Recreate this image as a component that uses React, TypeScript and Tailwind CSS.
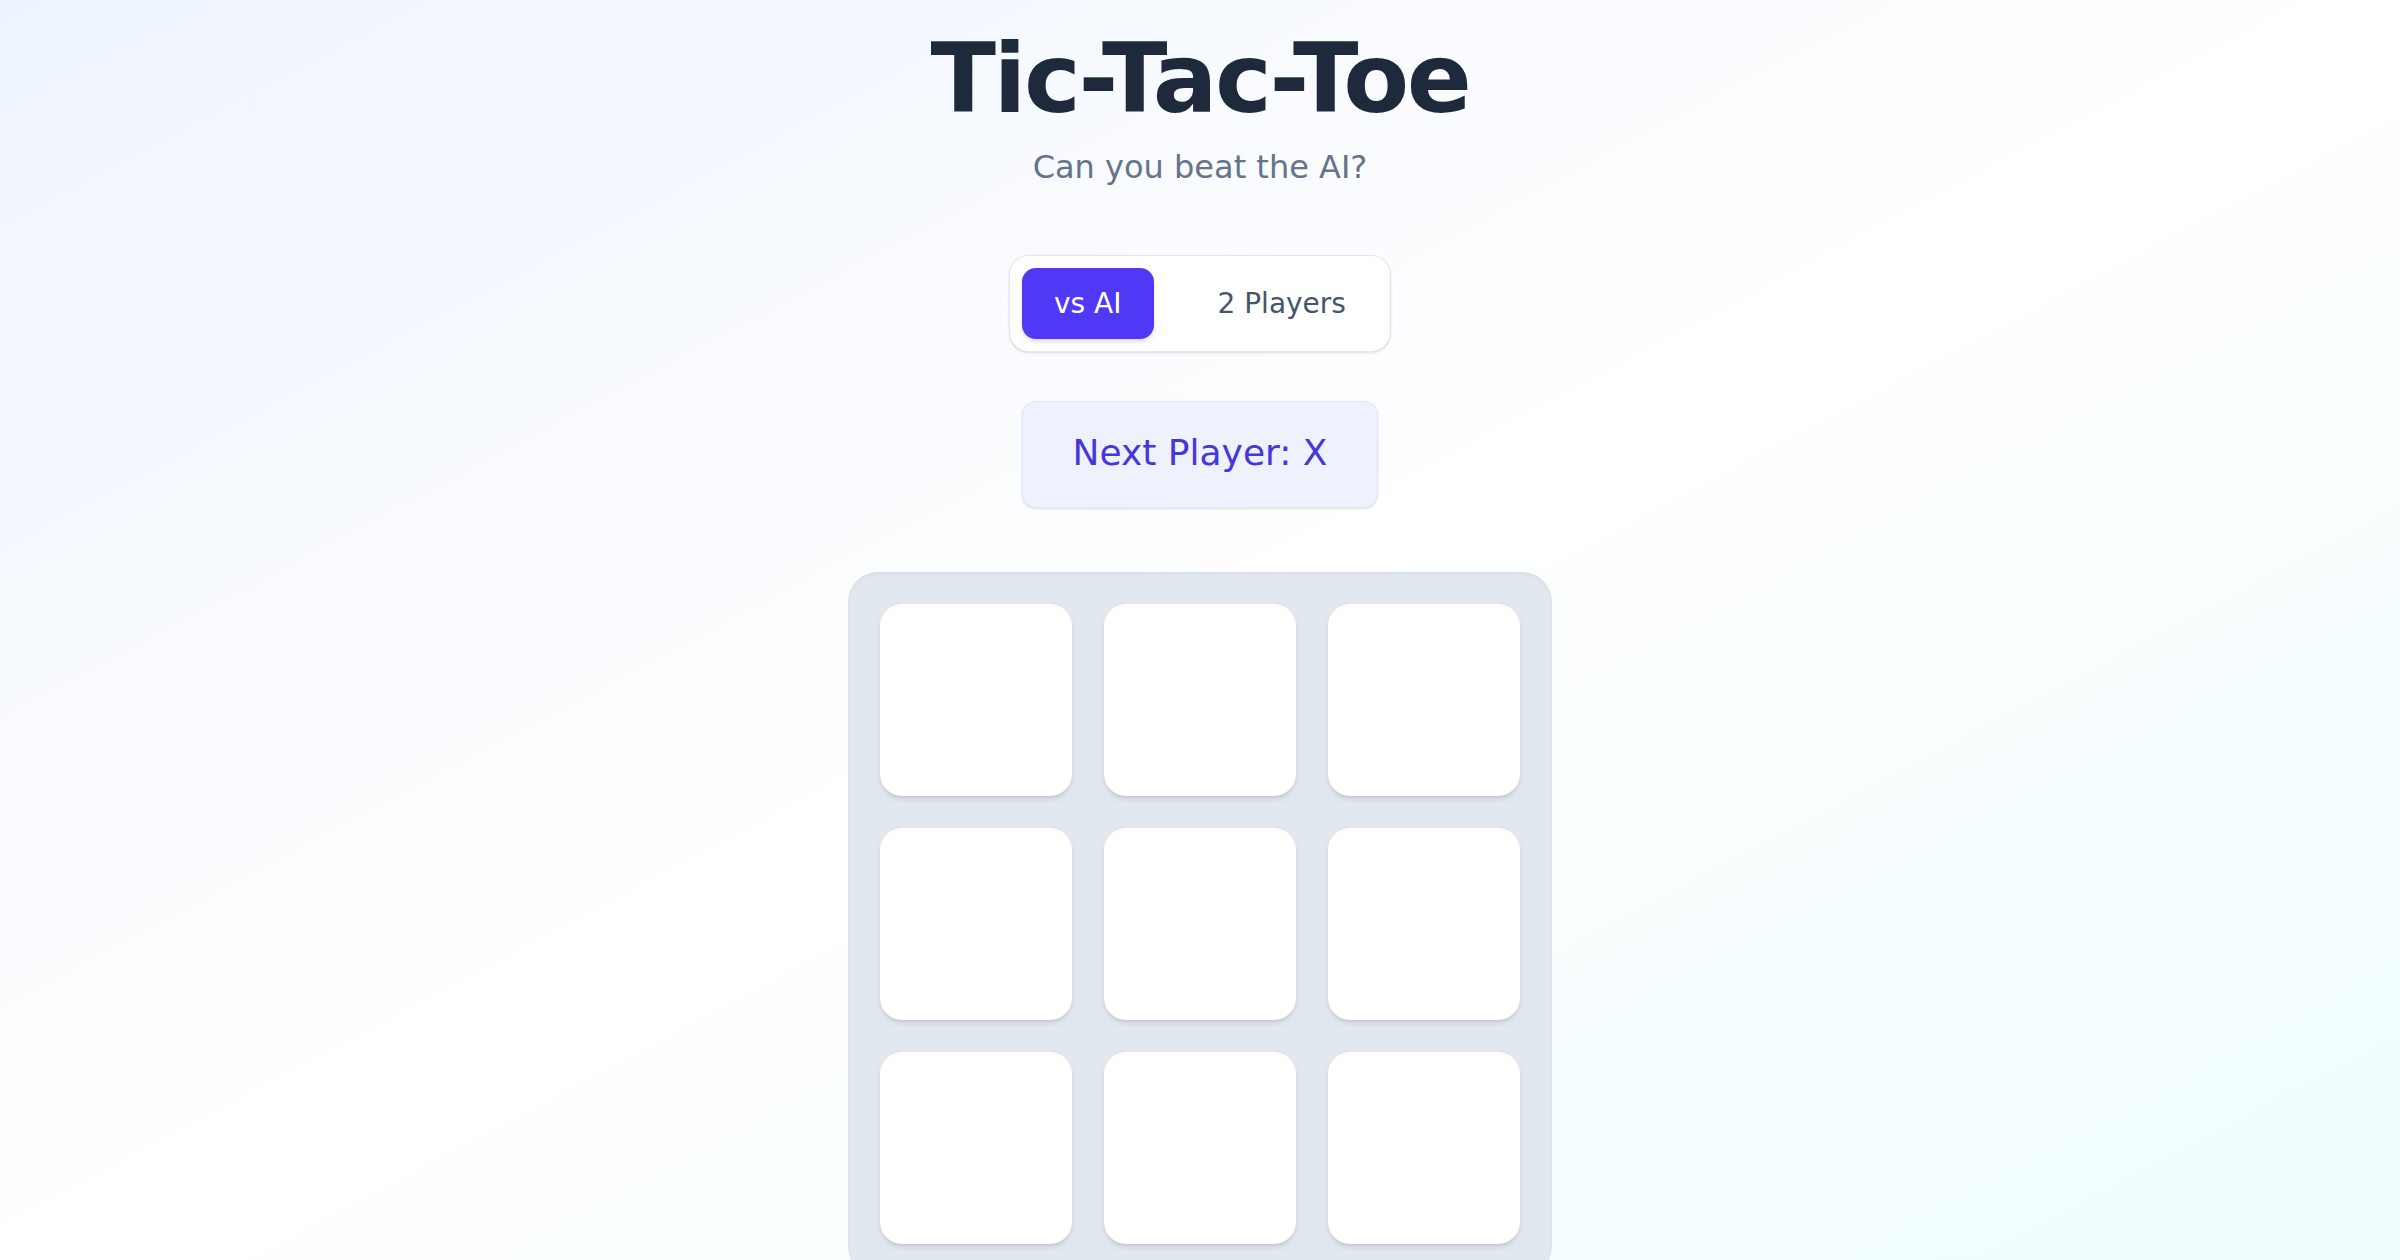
import { useState } from "react"

const font = { fontFamily: '"DejaVu Sans", Verdana, sans-serif' }

export default function App() {
  const [mode, setMode] = useState<"ai" | "pvp">("ai")
  const [cells] = useState<(string | null)[]>(Array(9).fill(null))

  return (
    <div
      style={font}
      className="min-h-screen w-full bg-linear-to-br from-[#eef4fe] via-white to-[#effdfe] flex flex-col items-center pt-[31px]"
    >
      <h1 className="text-[96px] leading-none font-bold tracking-tight text-[#1e293b]">Tic-Tac-Toe</h1>
      <p className="mt-[16px] text-[32px] leading-[48px] text-[#64748b]">Can you beat the AI?</p>

      <div className="mt-[64px] flex items-center gap-[32px] rounded-[20px] border border-[#e2e8f0] bg-white p-3 shadow-sm">
        <button
          onClick={() => setMode("ai")}
          className={
            mode === "ai"
              ? "h-[71px] px-8 rounded-[14px] bg-[#4f39f6] text-white text-[28px] shadow-md"
              : "h-[71px] px-8 rounded-[14px] text-[#475569] text-[28px]"
          }
        >
          vs AI
        </button>
        <button
          onClick={() => setMode("pvp")}
          className={
            mode === "pvp"
              ? "h-[71px] px-8 rounded-[14px] bg-[#4f39f6] text-white text-[28px] shadow-md"
              : "h-[71px] px-8 rounded-[14px] text-[#475569] text-[28px]"
          }
        >
          2 Players
        </button>
      </div>

      <div className="mt-[49px] flex h-[107px] items-center rounded-[14px] border border-[#e0e7ff] bg-[#eef2fd] px-[50px] pb-1 shadow-sm">
        <span className="text-[36px] text-[#4736d9]">Next Player: X</span>
      </div>

      <div className="mt-[64px] grid grid-cols-3 gap-8 rounded-[30px] bg-[#e2e8f0] p-8 shadow-inner">
        {cells.map((c, i) => (
          <button key={i} className="h-[192px] w-[192px] rounded-[22px] bg-white shadow-md text-[96px] font-bold">
            {c}
          </button>
        ))}
      </div>
    </div>
  )
}
